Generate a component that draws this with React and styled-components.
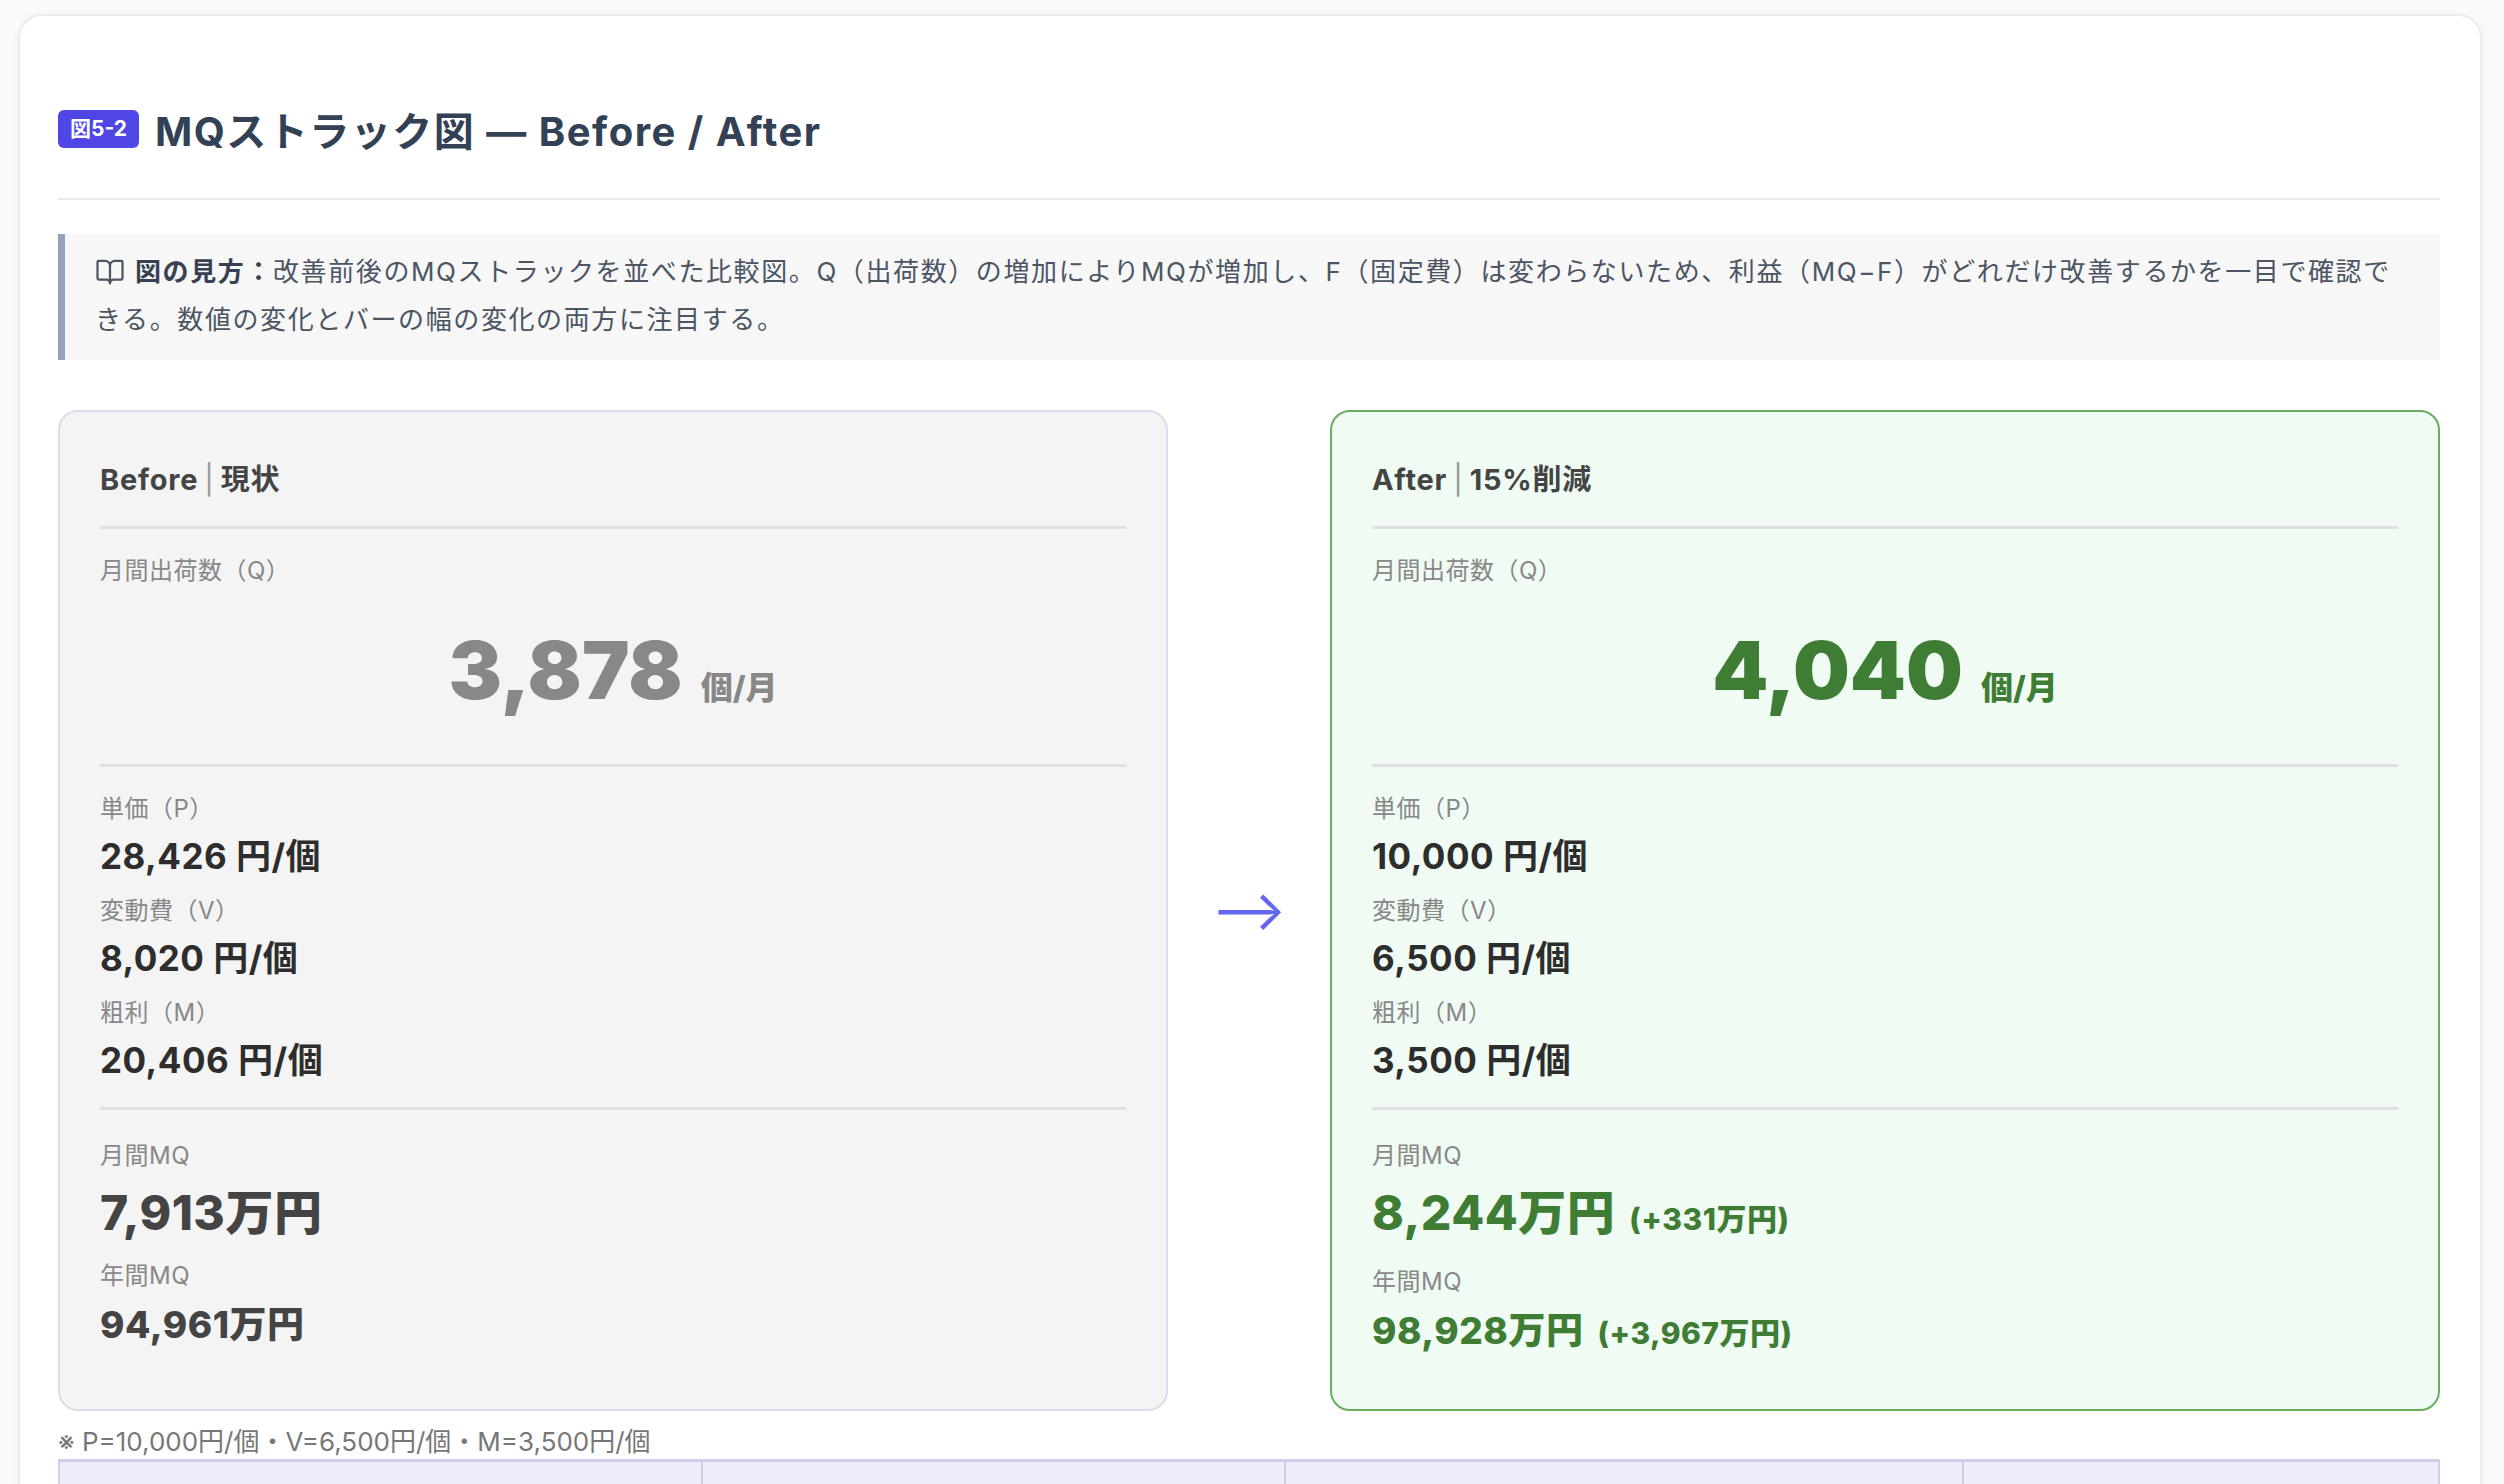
import React from "react";
import styled, { createGlobalStyle } from "styled-components";
import { BookOpen } from "lucide-react";

const Global = createGlobalStyle`
  body { margin: 0; background: #fafafa; font-family: Inter, "Noto Sans CJK JP", sans-serif; }
`;
const Page = styled.div`padding: 14px 22px 0 18px; height: 1484px; overflow: hidden; box-sizing: border-box;`;
const Sheet = styled.div`
  background: #fff; border: 2px solid #ececec; border-radius: 24px; box-shadow: 0 2px 10px rgba(0,0,0,0.05);
  padding: 84px 40px 0 38px; min-height: 1600px;
`;
const TitleRow = styled.div`display: flex; align-items: center; gap: 16px; padding-bottom: 40px; border-bottom: 2px solid #e5e7eb;`;
const Badge = styled.span`background: #4f46e5; color: #fff; font-size: 21px; font-weight: 700; border-radius: 6px; padding: 6px 12px; line-height: 26px;`;
const Title = styled.h1`margin: 0; font-size: 40px; font-weight: 700; color: #334155; letter-spacing: 1.5px;`;
const Info = styled.div`
  margin-top: 34px; background: #f7f7f8; border-left: 7px solid #94a3b8; padding: 14px 26px 16px 30px;
  font-size: 26px; line-height: 48px; color: #4b5563; letter-spacing: 1.6px;
  svg { vertical-align: -6px; margin-right: 10px; }
  b { color: #374151; }
`;
const Compare = styled.div`display: grid; grid-template-columns: 1fr 162px 1fr; margin-top: 50px; align-items: stretch;`;
const Card = styled.div`
  background: ${p => p.$after ? "#f0fbf3" : "#f4f4f4"};
  border: 2px solid ${p => p.$after ? "#6aad5e" : "#dcdcec"};
  border-radius: 20px; padding: 34px 40px 46px;
`;
const CardHead = styled.div`font-size: 29px; font-weight: 700; color: #444; padding: 10px 0 28px; border-bottom: 3px solid #e0e0e0; letter-spacing: 0.8px;
  span { color: #999; font-weight: 400; margin: 0 6px; }`;
const Label = styled.div`font-size: 24px; color: #888; margin-top: ${p => p.$mt || 0}px; line-height: 40px; letter-spacing: 0.5px;`;
const Big = styled.div`text-align: center; padding: 30px 0 46px; border-bottom: 3px solid #e0e0e0; color: ${p => p.$c};
  b { font-size: 80px; font-weight: 900; }
  span { font-size: 32px; font-weight: 800; margin-left: 18px; }`;
const Val = styled.div`font-size: 35px; font-weight: 700; color: #2d2d2d; line-height: 54px; letter-spacing: 0.5px;`;
const Group = styled.div`padding: ${p => p.$pad}; border-bottom: ${p => p.$line ? "3px solid #e0e0e0" : "none"};`;
const MQ = styled.div`font-weight: 800; color: ${p => p.$c}; font-size: ${p => p.$s}px; line-height: ${p => p.$s * 1.55}px; letter-spacing: 0.5px;
  small { font-size: ${p => p.$small}px; margin-left: 14px; }`;
const Arrow = styled.div`display: flex; align-items: center; justify-content: center; color: #6366f1; font-size: 56px;`;
const Note = styled.div`font-size: 26px; color: #777; margin-top: 14px; line-height: 34px;`;
const Table = styled.table`width: 100%; border-collapse: collapse; margin-top: 0;
  th { background: #efedfc; color: #4b4a8a; font-size: 30px; font-weight: 700; height: 100px; border: 2px solid #cfcdee; border-top-width: 3px; letter-spacing: 1px; }`;

const labels = ["単価（P）", "変動費（V）", "粗利（M）"];

function Side({ after, head, tag, q, color, p, v, m, mq, ymq, dmq, dy }) {
  const c = after ? "#3f7d35" : "#444";
  return (
    <Card $after={after}>
      <CardHead>{head}<span>|</span>{tag}</CardHead>
      <Label $mt={22}>月間出荷数（Q）</Label>
      <Big $c={color}><b>{q}</b><span>個/月</span></Big>
      <Group $pad="22px 0 20px" $line>
        {[p, v, m].map((x, i) => (
          <div key={i}><Label $mt={i ? 8 : 0}>{labels[i]}</Label><Val>{x} 円/個</Val></div>
        ))}
      </Group>
      <Group $pad="26px 0 0">
        <Label>月間MQ</Label>
        <MQ $c={c} $s={48} $small={30}>{mq}{dmq && <small>{dmq}</small>}</MQ>
        <Label $mt={6}>年間MQ</Label>
        <MQ $c={c} $s={37} $small={30}>{ymq}{dy && <small>{dy}</small>}</MQ>
      </Group>
    </Card>
  );
}

export default function App() {
  return (
    <Page>
      <Global />
      <Sheet>
        <TitleRow><Badge>図5-2</Badge><Title>MQストラック図 — Before / After</Title></TitleRow>
        <Info>
          <BookOpen size={30} strokeWidth={1.8} color="#4b5563" /><b>図の見方：</b>改善前後のMQストラックを並べた比較図。Q（出荷数）の増加によりMQが増加し、F（固定費）は変わらないため、利益（MQ−F）がどれだけ改善するかを一目で確認できる。数値の変化とバーの幅の変化の両方に注目する。
        </Info>
        <Compare>
          <Side head="Before" tag="現状" q="3,878" color="#888" p="28,426" v="8,020" m="20,406" mq="7,913万円" ymq="94,961万円" />
          <Arrow>⟶</Arrow>
          <Side after head="After" tag="15%削減" q="4,040" color="#3f7d35" p="10,000" v="6,500" m="3,500" mq="8,244万円" dmq="(+331万円)" ymq="98,928万円" dy="(+3,967万円)" />
        </Compare>
        <Note>※ P=10,000円/個・V=6,500円/個・M=3,500円/個</Note>
        <Table>
          <thead><tr>
            <th style={{ width: "27%" }}>指標</th><th style={{ width: "24.5%" }}>Before（現状）</th>
            <th style={{ width: "28.5%" }}>After（15%削減）</th><th>差分</th>
          </tr></thead>
        </Table>
      </Sheet>
    </Page>
  );
}
